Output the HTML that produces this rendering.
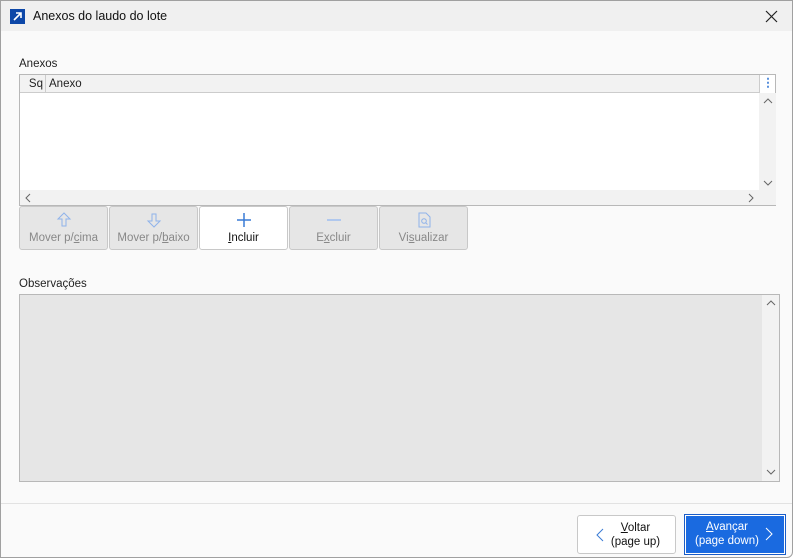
<!DOCTYPE html><html><head><style>
*{box-sizing:border-box;margin:0;padding:0}
body{width:794px;height:559px;background:#fff;font-family:"Liberation Sans",sans-serif;font-size:11.5px;color:#222;position:relative;overflow:hidden}
.win{position:absolute;left:0;top:0;width:793px;height:558px;border:1px solid #a0a0a0;background:#fafafa;border-radius:0 0 6px 0}
.title{position:absolute;left:0;top:0;width:791px;height:30px;background:#f0f0f0}
.abs{position:absolute}
.btn{position:absolute;top:205px;width:89px;height:44px;border:1px solid #c8c8c8;border-radius:3px;background:#e6e6e6;color:#888;text-align:center;font-size:11.5px}
.btn .t{position:absolute;left:0;right:0;top:25px}
.btn svg{position:absolute;left:36px;top:5px}
</style></head><body>
<div class="win">
<div class="title">
 <div class="abs" style="left:9px;top:8px;width:15px;height:15px;background:#0d47a8"><svg width="15" height="15"><path d="M4 11L11 4M6 4h5v5" stroke="#fff" stroke-width="1.6" fill="none"/></svg></div>
 <div class="abs" style="left:32px;top:8px;font-size:12.5px;color:#111">Anexos do laudo do lote</div>
 <svg class="abs" style="left:764px;top:9px" width="13" height="13"><path d="M1 1L12 12M12 1L1 12" stroke="#222" stroke-width="1.2"/></svg>
</div>
<div class="abs" style="left:18px;top:57px">Anexos</div>
<div class="abs" style="left:18px;top:73px;width:757px;height:132px;border:1px solid #b8b8b8;background:#fff">
 <div class="abs" style="left:0;top:0;width:739px;height:18px;background:#f2f2f2;border-bottom:1px solid #ccc"></div>
 <div class="abs" style="left:0;top:0;width:26px;height:18px;border-right:1px solid #ccc;text-align:right;padding-right:2px;line-height:18px">Sq</div>
 <div class="abs" style="left:29px;top:0;line-height:18px">Anexo</div>
 <div class="abs" style="left:739px;top:0;width:17px;height:18px;border-left:1px solid #ccc;color:#3a7bd5;text-align:center;line-height:16px;font-weight:bold">⋮</div>
 <div class="abs" style="left:739px;top:18px;width:17px;height:97px;background:#f2f2f2"></div>
 <svg class="abs" style="left:743px;top:22px" width="10" height="8"><path d="M1 6L5 2L9 6" stroke="#666" fill="none"/></svg>
 <svg class="abs" style="left:743px;top:104px" width="10" height="8"><path d="M1 2L5 6L9 2" stroke="#666" fill="none"/></svg>
 <div class="abs" style="left:0;top:115px;width:756px;height:15px;background:#f2f2f2"></div>
 <svg class="abs" style="left:4px;top:118px" width="8" height="10"><path d="M6 1L2 5L6 9" stroke="#666" fill="none"/></svg>
 <svg class="abs" style="left:727px;top:118px" width="8" height="10"><path d="M2 1L6 5L2 9" stroke="#666" fill="none"/></svg>
</div>
<div class="btn" style="left:18px"><svg width="16" height="16"><path d="M8 1L2 7h4v7h4V7h4z" stroke="#8fb3ea" fill="none"/></svg><div class="t">Mover p/<u>c</u>ima</div></div>
<div class="btn" style="left:108px"><svg width="16" height="16"><path d="M8 15L2 9h4V2h4v7h4z" stroke="#8fb3ea" fill="none"/></svg><div class="t">Mover p/<u>b</u>aixo</div></div>
<div class="btn" style="left:198px;background:#fff;color:#111"><svg width="16" height="16"><path d="M8 1v14M1 8h14" stroke="#3a7bd5" stroke-width="1.5"/></svg><div class="t"><u>I</u>ncluir</div></div>
<div class="btn" style="left:288px"><svg width="16" height="16"><path d="M1 8h14" stroke="#9fbef0" stroke-width="1.5"/></svg><div class="t">E<u>x</u>cluir</div></div>
<div class="btn" style="left:378px"><svg width="16" height="16"><path d="M3 1h7l4 4v10H3z" stroke="#8fb3ea" fill="none"/><circle cx="8" cy="9" r="2.3" stroke="#8fb3ea" fill="none"/><path d="M9.7 10.7L11.5 12.5" stroke="#8fb3ea"/></svg><div class="t">Vi<u>s</u>ualizar</div></div>
<div class="abs" style="left:18px;top:277px">Observações</div>
<div class="abs" style="left:18px;top:293px;width:761px;height:188px;border:1px solid #b8b8b8;background:#e6e6e6">
 <div class="abs" style="left:742px;top:0;width:17px;height:186px;background:#f2f2f2"></div>
 <svg class="abs" style="left:746px;top:4px" width="10" height="8"><path d="M1 6L5 2L9 6" stroke="#666" fill="none"/></svg>
 <svg class="abs" style="left:746px;top:173px" width="10" height="8"><path d="M1 2L5 6L9 2" stroke="#666" fill="none"/></svg>
</div>
<div class="abs" style="left:0;top:502px;width:791px;height:1px;background:#e2e2e2"></div>
<div class="abs" style="left:576px;top:514px;width:99px;height:39px;border:1px solid #c8c8c8;border-radius:3px;background:#fff;text-align:center;line-height:14px;padding-top:5px;padding-left:18px;color:#111"><u>V</u>oltar<br>(page up)
 <svg class="abs" style="left:18px;top:12px" width="8" height="14"><path d="M7 1L1 7L7 13" stroke="#3a7bd5" fill="none"/></svg></div>
<div class="abs" style="left:683px;top:513px;width:102px;height:41px;border:1px solid #1a5dc8;background:#fff;padding:1px"><div style="width:98px;height:37px;background:#1a6ae0;color:#fff;text-align:center;line-height:14px;padding-top:4px;padding-right:16px;position:relative"><u>A</u>vançar<br>(page down)
 <svg class="abs" style="left:79px;top:11px" width="8" height="14"><path d="M1 1L7 7L1 13" stroke="#fff" fill="none"/></svg></div></div>
</div>
</body></html>
